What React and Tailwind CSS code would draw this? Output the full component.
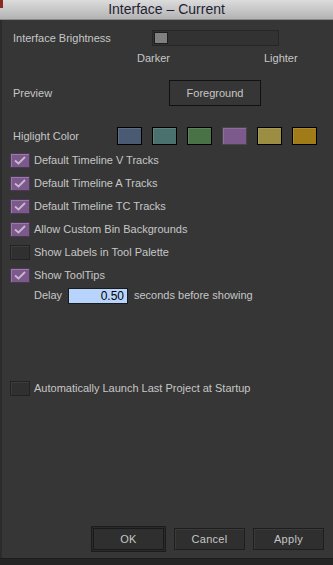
import React from 'react';

const font = { fontFamily: '"Liberation Sans", Arial, sans-serif' };

const swatches = [
  { bg: 'bg-[#4b5a73]', border: 'border-black' },
  { bg: 'bg-[#4b716f]', border: 'border-black' },
  { bg: 'bg-[#4a7247]', border: 'border-black' },
  { bg: 'bg-[#7c5a8c]', border: 'border-[#474747]' },
  { bg: 'bg-[#9b8d42]', border: 'border-black' },
  { bg: 'bg-[#a27b19]', border: 'border-black' },
];

const CheckBox = ({ checked }) =>
  checked ? (
    <div className="w-[20px] h-[15px] bg-[#7b5a8b] border border-[#4c3656] shadow-[inset_1px_1px_0_#9a7aa8] flex items-center justify-center">
      <svg width="12" height="9" viewBox="0 0 12 9">
        <path d="M1 4.5 L4.5 7.5 L11 1" stroke="#c9b8d2" strokeWidth="1.8" fill="none" />
      </svg>
    </div>
  ) : (
    <div className="w-[20px] h-[15px] bg-[#303030] border border-[#232323] shadow-[inset_1px_1px_0_#3c3c3c]" />
  );

const CheckRow = ({ checked, label }) => (
  <div className="h-[23px] flex items-center pl-[8px]">
    <CheckBox checked={checked} />
    <span className="ml-[4px] text-[11px] text-[#c6c6c6]">{label}</span>
  </div>
);

const Button = ({ children, active }) =>
  active ? (
    <div className="w-[75px] h-[26px] border border-[#1c1c1c] p-px bg-[#2a2a2a]">
      <div className="w-full h-full bg-[#2f2f2f] border border-[#1a1a1a] flex items-center justify-center text-[11px] text-[#c6c6c6] tracking-[0.3px]">
        {children}
      </div>
    </div>
  ) : (
    <div className="w-[71px] h-[22px] bg-[#2f2f2f] border border-[#1e1e1e] shadow-[inset_1px_1px_0_#3a3a3a] flex items-center justify-center text-[11px] text-[#c6c6c6] tracking-[0.3px]">
      {children}
    </div>
  );

export default function App() {
  return (
    <div className="w-[333px] h-[565px] flex flex-col bg-[#363636] overflow-hidden" style={font}>
      {/* Title bar */}
      <div className="h-[20px] bg-gradient-to-b from-[#dcdcdc] to-[#b3b3b3] border-b border-[#8a8a8a] flex items-center justify-center relative">
        <div className="absolute left-0 top-0 w-[3px] h-[8px] bg-[#8b2a1e]" />
        <span className="text-[14px] text-[#1f1f33]">Interface – Current</span>
      </div>

      <div className="flex-1 flex flex-col border-l-2 border-[#2b2b2b] text-[#c6c6c6] text-[11px]">
        {/* Brightness */}
        <div className="mt-[10px] h-[16px] flex items-center">
          <span className="pl-[11px] w-[150px]">Interface Brightness</span>
          <div className="w-[127px] h-[16px] bg-[#323232] border border-[#262626] p-px">
            <div className="w-[14px] h-full bg-[#808080] border border-[#1e1e1e]" />
          </div>
        </div>
        <div className="mt-[6px] h-[12px] flex items-center">
          <span className="ml-[135px] w-[127px]">Darker</span>
          <span>Lighter</span>
        </div>

        {/* Preview */}
        <div className="mt-[16px] h-[26px] flex items-center">
          <span className="pl-[11px] w-[167px]">Preview</span>
          <div className="w-[92px] h-[26px] border border-[#111] flex items-center justify-center">
            Foreground
          </div>
        </div>

        {/* Highlight color */}
        <div className="mt-[21px] h-[18px] flex items-center">
          <span className="pl-[11px] w-[115px]">Higlight Color</span>
          <div className="flex gap-[10px]">
            {swatches.map((s, i) => (
              <div key={i} className={`w-[25px] h-[18px] border ${s.border} ${s.bg} shadow-[inset_1px_1px_0_rgba(255,255,255,0.12)]`} />
            ))}
          </div>
        </div>

        {/* Checkboxes */}
        <div className="mt-[4px] flex flex-col">
          <CheckRow checked label="Default Timeline V Tracks" />
          <CheckRow checked label="Default Timeline A Tracks" />
          <CheckRow checked label="Default Timeline TC Tracks" />
          <CheckRow checked label="Allow Custom Bin Backgrounds" />
          <CheckRow label="Show Labels in Tool Palette" />
          <CheckRow checked label="Show ToolTips" />
        </div>
        <div className="h-[17px] flex items-center">
          <span className="ml-[32px] w-[34px]">Delay</span>
          <div className="w-[60px] h-[16px] border border-[#1a1a1a] bg-[#b7d4fc] flex items-center justify-end pr-[3px] text-[12px] text-black">
            0.50
          </div>
          <span className="ml-[6px]">seconds before showing</span>
        </div>

        {/* Auto launch */}
        <div className="mt-[73px]">
          <CheckRow label="Automatically Launch Last Project at Startup" />
        </div>

        <div className="flex-1" />

        {/* Buttons */}
        <div className="flex items-center justify-end pr-[9px] gap-[8px] mb-[6px]">
          <Button active>OK</Button>
          <Button>Cancel</Button>
          <Button>Apply</Button>
        </div>
      </div>
      <div className="h-[7px] bg-[#242424] border-t border-[#1c1c1c]" />
    </div>
  );
}
